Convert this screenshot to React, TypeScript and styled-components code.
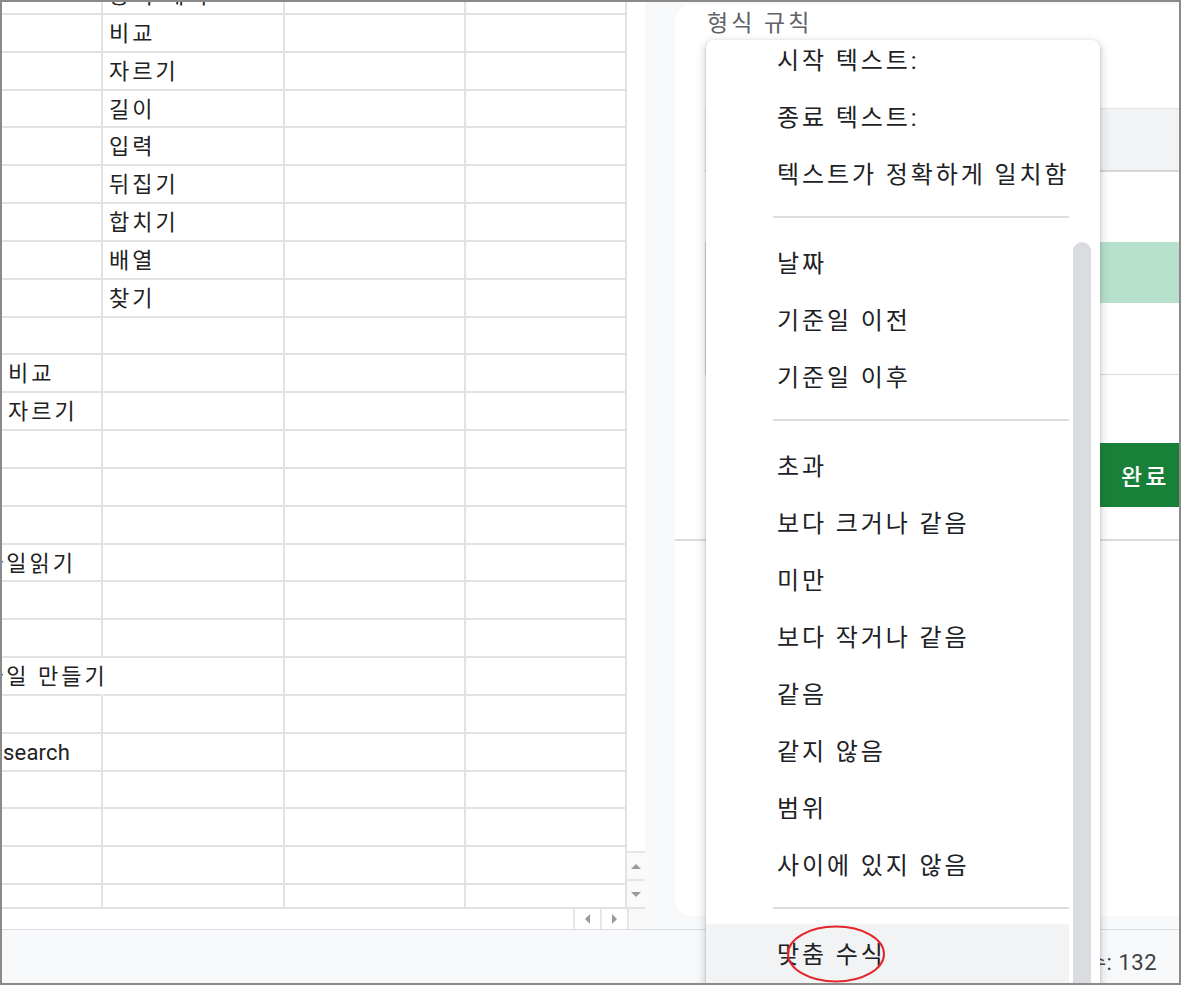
import styled, { createGlobalStyle } from "styled-components";

const GlobalStyle = createGlobalStyle`
  html, body {
    margin: 0;
    padding: 0;
    background: #ffffff;
  }
  body {
    font-family: Roboto, "Noto Sans CJK KR", sans-serif;
    color: #202124;
  }
  * {
    box-sizing: border-box;
  }
`;

type SheetRow = {
  a?: string;
  b?: string;
  shift?: boolean; // text starts in a column that is scrolled out of view
  spill?: boolean; // text runs over into the next column
  latin?: boolean;
};

const sheetRows: SheetRow[] = [
  { b: "공백 제거" },
  { b: "비교" },
  { b: "자르기" },
  { b: "길이" },
  { b: "입력" },
  { b: "뒤집기" },
  { b: "합치기" },
  { b: "배열" },
  { b: "찾기" },
  {},
  { a: "비교" },
  { a: "자르기" },
  {},
  {},
  {},
  { a: "파일읽기", shift: true },
  {},
  {},
  { a: "파일 만들기", shift: true, spill: true },
  {},
  { a: "search", latin: true },
  {},
  {},
  {},
  {},
];

type MenuEntry = { label: string; active?: boolean } | "sep";

const menuEntries: MenuEntry[] = [
  { label: "시작 텍스트:" },
  { label: "종료 텍스트:" },
  { label: "텍스트가 정확하게 일치함" },
  "sep",
  { label: "날짜" },
  { label: "기준일 이전" },
  { label: "기준일 이후" },
  "sep",
  { label: "초과" },
  { label: "보다 크거나 같음" },
  { label: "미만" },
  { label: "보다 작거나 같음" },
  { label: "같음" },
  { label: "같지 않음" },
  { label: "범위" },
  { label: "사이에 있지 않음" },
  "sep",
  { label: "맞춤 수식", active: true },
];

export default function App() {
  return (
    <>
      <GlobalStyle />
      <Frame>
        <Main>
          <SheetArea>
            <SheetBody>
              <Grid>
                <GridRows>
                  {sheetRows.map((row, i) => (
                    <GridRow key={i}>
                      <Cell $spill={row.spill}>
                        {row.a && (
                          <CellText $shift={row.shift} $latin={row.latin}>
                            {row.a}
                          </CellText>
                        )}
                      </Cell>
                      <Cell>{row.b && <CellText>{row.b}</CellText>}</Cell>
                      <Cell />
                      <Cell />
                    </GridRow>
                  ))}
                </GridRows>
              </Grid>
              <VScroll>
                <ScrollButton>
                  <Arrow $dir="up" />
                </ScrollButton>
                <ScrollButton>
                  <Arrow $dir="down" />
                </ScrollButton>
              </VScroll>
            </SheetBody>
            <HScroll>
              <HScrollButton>
                <Arrow $dir="left" />
              </HScrollButton>
              <HScrollButton>
                <Arrow $dir="right" />
              </HScrollButton>
              <ScrollCorner />
            </HScroll>
          </SheetArea>

          <SideArea>
            <PanelCard>
              <PanelContent>
                <PanelTitle>형식 규칙</PanelTitle>
                <SelectField />
                <PreviewBox>
                  <PreviewFill />
                </PreviewBox>
                <ButtonRow>
                  <DoneButton>완료</DoneButton>
                </ButtonRow>
              </PanelContent>
              <PanelDivider />
            </PanelCard>
          </SideArea>
        </Main>

        <StatusBar>
          <StatusText>개수: 132</StatusText>
        </StatusBar>

        <Menu>
          <MenuList>
            <MenuInner>
              {menuEntries.map((entry, i) =>
                entry === "sep" ? (
                  <MenuSeparator key={i} />
                ) : (
                  <MenuItem key={i} $active={entry.active}>
                    {entry.label}
                  </MenuItem>
                )
              )}
            </MenuInner>
          </MenuList>
          <MenuTrack>
            <MenuThumb />
          </MenuTrack>
        </Menu>

        <Marker width="100" height="60" viewBox="0 0 100 60">
          <ellipse cx="50" cy="30" rx="48" ry="27.5" fill="none" stroke="#e3262b" strokeWidth="2" />
        </Marker>
      </Frame>
    </>
  );
}

const Frame = styled.div`
  position: relative;
  width: 1181px;
  height: 985px;
  border: 2px solid #8a8a8a;
  overflow: hidden;
  display: flex;
  flex-direction: column;
  background: #ffffff;
`;

const Main = styled.div`
  display: flex;
  height: 927px;
`;

/* ---------- sheet ---------- */

const SheetArea = styled.div`
  width: 643px;
  flex: none;
  display: flex;
  flex-direction: column;
`;

const SheetBody = styled.div`
  display: flex;
  height: 907px;
`;

const Grid = styled.div`
  width: 625px;
  overflow: hidden;
  border-bottom: 2px solid #e2e2e2;
`;

const GridRows = styled.div`
  margin-top: -24.83px;
`;

const GridRow = styled.div`
  display: grid;
  grid-template-columns: 101px 182px 181px 161px;
  height: 37.83px;
`;

const Cell = styled.div<{ $spill?: boolean }>`
  display: flex;
  align-items: center;
  padding: 2px 0 0 6px;
  white-space: nowrap;
  border-bottom: 2px solid #e2e2e2;
  border-right: 2px solid ${(p) => (p.$spill ? "transparent" : "#e2e2e2")};
  font-size: 22px;
  line-height: 26px;
  color: #222222;
`;

const CellText = styled.span<{ $shift?: boolean; $latin?: boolean }>`
  margin-left: ${(p) => (p.$shift ? "-25px" : p.$latin ? "-5px" : "0")};
  letter-spacing: ${(p) => (p.$latin ? "0.2px" : "3px")};
`;

const VScroll = styled.div`
  width: 18px;
  display: flex;
  flex-direction: column;
  justify-content: flex-end;
  border-bottom: 2px solid #e2e2e2;
`;

const ScrollButton = styled.div`
  height: 28px;
  display: flex;
  align-items: center;
  justify-content: center;
  border-top: 2px solid #e6e6e6;
  background: #fafafa;
`;

const HScroll = styled.div`
  height: 20px;
  display: flex;
  justify-content: flex-end;
`;

const HScrollButton = styled.div`
  width: 27px;
  display: flex;
  align-items: center;
  justify-content: center;
  border-left: 2px solid #e6e6e6;
`;

const ScrollCorner = styled.div`
  width: 18px;
  border-left: 2px solid #e6e6e6;
  background: #f8f8f8;
`;

const arrowBorders = {
  up: "border-left: 5px solid transparent; border-right: 5px solid transparent; border-bottom: 5px solid #9a9a9a;",
  down: "border-left: 5px solid transparent; border-right: 5px solid transparent; border-top: 5px solid #9a9a9a;",
  left: "border-top: 5px solid transparent; border-bottom: 5px solid transparent; border-right: 5px solid #9a9a9a;",
  right: "border-top: 5px solid transparent; border-bottom: 5px solid transparent; border-left: 5px solid #9a9a9a;",
};

const Arrow = styled.span<{ $dir: keyof typeof arrowBorders }>`
  width: 0;
  height: 0;
  ${(p) => arrowBorders[p.$dir]}
`;

/* ---------- side panel ---------- */

const SideArea = styled.div`
  flex: 1;
  min-width: 0;
  background: #f8f9fa;
  padding: 3px 0 13px 30px;
  display: flex;
`;

const PanelCard = styled.div`
  flex: none;
  width: 620px;
  background: #ffffff;
  border-radius: 16px 0 0 16px;
`;

const PanelContent = styled.div`
  width: 517px;
  padding-left: 30px;
  display: flex;
  flex-direction: column;
`;

const PanelTitle = styled.div`
  margin: 4px 0 0 2px;
  height: 30px;
  font-size: 23px;
  line-height: 30px;
  letter-spacing: 3px;
  color: #5f6368;
`;

const SelectField = styled.div`
  margin-top: 69px;
  height: 64px;
  background: #f1f3f4;
  border-top: 1px solid #e3e3e3;
  border-bottom: 2px solid #d6d6d6;
`;

const PreviewBox = styled.div`
  margin-top: 70px;
  height: 133px;
  border: 1px solid #dadce0;
  border-top: none;
`;

const PreviewFill = styled.div`
  height: 61px;
  background: #b7e1cd;
`;

const ButtonRow = styled.div`
  margin-top: 68px;
  display: flex;
  justify-content: flex-end;
`;

const DoneButton = styled.div`
  width: 92px;
  height: 64px;
  display: flex;
  align-items: center;
  padding-left: 21px;
  background: #188038;
  color: #ffffff;
  font-size: 23px;
  letter-spacing: 3px;
  font-weight: 500;
`;

const PanelDivider = styled.div`
  margin-top: 32px;
  height: 2px;
  background: #dadce0;
`;

/* ---------- status bar ---------- */

const StatusBar = styled.div`
  flex: 1;
  display: flex;
  align-items: center;
  justify-content: flex-end;
  padding: 6px 22px 0 0;
  background: #f8f9fa;
  border-top: 1px solid #dadce0;
`;

const StatusText = styled.span`
  font-size: 22px;
  letter-spacing: 0.5px;
  color: #3c4043;
`;

/* ---------- dropdown ---------- */

const Menu = styled.div`
  position: absolute;
  left: 704px;
  top: 38px;
  width: 394px;
  height: 960px;
  display: flex;
  background: #ffffff;
  border-radius: 8px;
  overflow: hidden;
  box-shadow: 0 1px 3px rgba(60, 64, 67, 0.3), 0 4px 8px 3px rgba(60, 64, 67, 0.15);
`;

const MenuList = styled.div`
  width: 363px;
  overflow: hidden;
`;

const MenuInner = styled.div`
  margin-top: -10.5px;
`;

const MenuItem = styled.div<{ $active?: boolean }>`
  height: ${(p) => (p.$active ? "62px" : "57px")};
  display: flex;
  align-items: ${(p) => (p.$active ? "flex-start" : "center")};
  padding: ${(p) => (p.$active ? "11px 0 0 71px" : "0 0 0 71px")};
  font-size: 24px;
  letter-spacing: 2.9px;
  color: #202124;
  white-space: nowrap;
  background: ${(p) => (p.$active ? "#f1f3f4" : "transparent")};
`;

const MenuSeparator = styled.div`
  height: 2px;
  margin: 15px 0 15px 67px;
  background: #dadce0;
`;

const MenuTrack = styled.div`
  width: 31px;
  padding: 202px 0 0 4px;
  display: flex;
`;

const MenuThumb = styled.div`
  width: 18px;
  border-radius: 9px 9px 0 0;
  background: #dadce0;
`;

const Marker = styled.svg`
  position: absolute;
  left: 784px;
  top: 922px;
`;
